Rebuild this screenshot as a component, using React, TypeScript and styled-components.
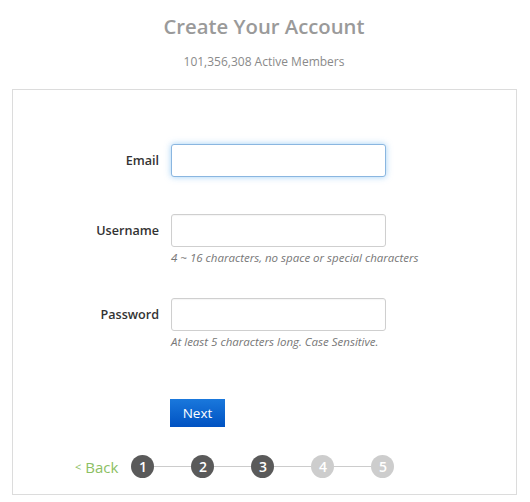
import React from "react";
import styled, { createGlobalStyle } from "styled-components";

const Global = createGlobalStyle`
  html, body { margin: 0; padding: 0; background: #fff; }
  body { font-family: "Open Sans", "Noto Sans", Arial, sans-serif; }
  * { box-sizing: border-box; }
`;

const Page = styled.div`
  width: 530px;
  padding: 0 14px 0 12px;
`;

const Title = styled.h1`
  margin: 0;
  padding-top: 12px;
  text-align: center;
  font-size: 20.3px;
  font-weight: 600;
  line-height: 28px;
  color: #9a9a9a;
`;

const Subtitle = styled.p`
  margin: 14px 0 0;
  text-align: center;
  font-size: 12px;
  line-height: 16px;
  color: #8a8a8a;
`;

const Card = styled.div`
  margin-top: 19px;
  width: 505px;
  height: 406px;
  border: 1px solid #dcdcdc;
  padding-top: 54px;
  display: flex;
  flex-direction: column;
`;

const Row = styled.div<{ $after: number }>`
  display: grid;
  grid-template-columns: 146px 215px;
  column-gap: 12px;
  align-items: center;
  margin-bottom: ${(p) => p.$after}px;
`;

const Label = styled.label`
  text-align: right;
  font-size: 12.6px;
  font-weight: 600;
  color: #333;
`;

const Input = styled.input<{ $focus?: boolean }>`
  width: 215px;
  height: 33px;
  border-radius: 3px;
  border: 1px solid ${(p) => (p.$focus ? "#8ab6e0" : "#cfcfcf")};
  box-shadow: ${(p) =>
    p.$focus ? "0 0 6px rgba(82,168,236,0.55)" : "inset 0 1px 1px rgba(0,0,0,0.04)"};
  outline: none;
  font-family: inherit;
  font-size: 12px;
  padding: 0 6px;
`;

const Hint = styled.div`
  grid-column: 2;
  margin-top: 3px;
  font-size: 11.5px;
  line-height: 15px;
  font-style: italic;
  color: #777;
  white-space: nowrap;
`;

const ButtonRow = styled.div`
  padding-left: 157px;
`;

const NextButton = styled.button`
  width: 55px;
  height: 28px;
  border: none;
  border-radius: 0;
  background: linear-gradient(#1a78dc, #0052c2);
  color: #fff;
  font-family: inherit;
  font-size: 13.5px;
  padding: 0;
  cursor: pointer;
`;

const Steps = styled.div`
  margin-top: 28px;
  padding-left: 62px;
  display: flex;
  align-items: center;
`;

const Back = styled.a`
  color: #8cc063;
  font-size: 15px;
  line-height: 22px;
  text-decoration: none;
  margin-right: 13px;
  display: flex;
  align-items: center;
`;

const Lt = styled.span`
  font-size: 11px;
  margin-right: 4px;
`;

const Circle = styled.span<{ $done: boolean }>`
  width: 23px;
  height: 23px;
  border-radius: 50%;
  background: ${(p) => (p.$done ? "#5a5a5a" : "#cdcdcd")};
  color: #fff;
  font-size: 14px;
  font-weight: 600;
  display: flex;
  align-items: center;
  justify-content: center;
  flex-shrink: 0;
`;

const Line = styled.span`
  width: 37px;
  height: 1px;
  background: #cccccc;
`;

export default function App() {
  const steps = [1, 2, 3, 4, 5];
  return (
    <Page>
      <Global />
      <Title>Create Your Account</Title>
      <Subtitle>101,356,308 Active Members</Subtitle>
      <Card>
        <Row $after={37}>
          <Label>Email</Label>
          <Input $focus />
        </Row>
        <Row $after={33}>
          <Label>Username</Label>
          <Input />
          <Hint>4 ~ 16 characters, no space or special characters</Hint>
        </Row>
        <Row $after={50}>
          <Label>Password</Label>
          <Input type="password" />
          <Hint>At least 5 characters long. Case Sensitive.</Hint>
        </Row>
        <ButtonRow>
          <NextButton>Next</NextButton>
        </ButtonRow>
        <Steps>
          <Back href="#">
            <Lt>&lt;</Lt>Back
          </Back>
          {steps.map((n, i) => (
            <React.Fragment key={n}>
              {i > 0 && <Line />}
              <Circle $done={n <= 3}>{n}</Circle>
            </React.Fragment>
          ))}
        </Steps>
      </Card>
    </Page>
  );
}
